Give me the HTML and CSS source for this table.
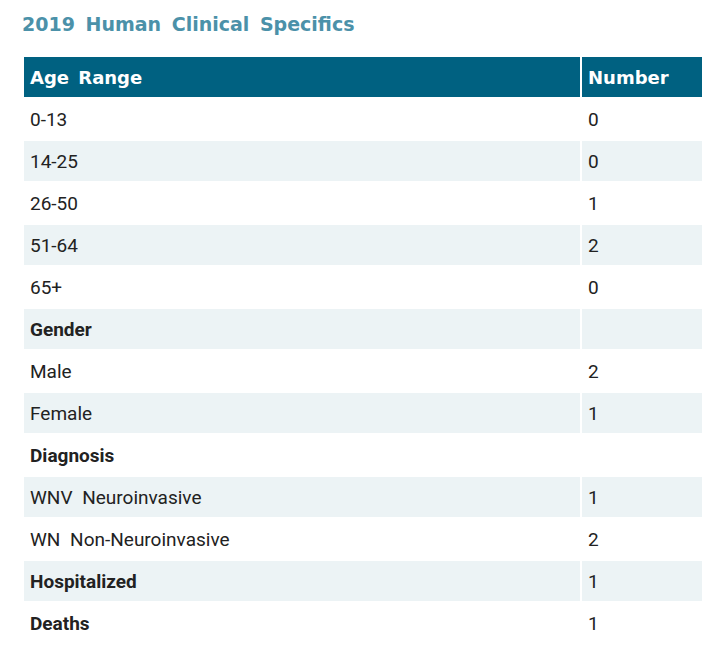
FILE: index.html
```html
<!DOCTYPE html>
<html>
<head>
<meta charset="utf-8">
<link rel="stylesheet" href="styles.css">
</head>
<body>
<div class="page">
  <h2 class="title">2019 Human Clinical Specifics</h2>
  <table class="specs">
    <thead>
      <tr><th class="c1">Age Range</th><th class="c2">Number</th></tr>
    </thead>
    <tbody>
      <tr><td>0-13</td><td>0</td></tr>
      <tr><td>14-25</td><td>0</td></tr>
      <tr><td>26-50</td><td>1</td></tr>
      <tr><td>51-64</td><td>2</td></tr>
      <tr><td>65+</td><td>0</td></tr>
      <tr class="group"><td>Gender</td><td></td></tr>
      <tr><td>Male</td><td>2</td></tr>
      <tr><td>Female</td><td>1</td></tr>
      <tr class="group"><td>Diagnosis</td><td></td></tr>
      <tr><td>WNV Neuroinvasive</td><td>1</td></tr>
      <tr><td>WN Non-Neuroinvasive</td><td>2</td></tr>
      <tr class="group"><td>Hospitalized</td><td>1</td></tr>
      <tr class="group"><td>Deaths</td><td>1</td></tr>
    </tbody>
  </table>
</div>
</body>
</html>
```
FILE: styles.css
```css
html, body { margin: 0; padding: 0; background: #fff; }
.page { padding: 10px 5px 0 22px; }
.title {
  margin: 0 0 17px 0;
  font-family: "DejaVu Sans", sans-serif;
  font-weight: bold;
  font-size: 19px;
  line-height: 28px;
  color: #4b91a9;
  word-spacing: 4px;
  letter-spacing: 0;
}
.specs {
  border-collapse: separate;
  border-spacing: 2px;
  width: 682px;
  font-family: Roboto, "Liberation Sans", sans-serif;
  font-size: 19px;
  color: #222;
  word-spacing: 5px;
}
.specs th, .specs td {
  height: 40px;
  padding: 0 6px;
  text-align: left;
  vertical-align: middle;
  box-sizing: border-box;
}
.specs th {
  background: #006181;
  color: #fff;
  font-family: "DejaVu Sans", sans-serif;
  font-weight: bold;
  font-size: 18px;
  word-spacing: 3px;
}
.specs .c1 { width: 556px; }
.specs .c2 { width: 120px; }
.specs tbody tr:nth-child(even) td { background: #ecf3f5; }
.specs .group td:first-child { font-weight: bold; }
```
